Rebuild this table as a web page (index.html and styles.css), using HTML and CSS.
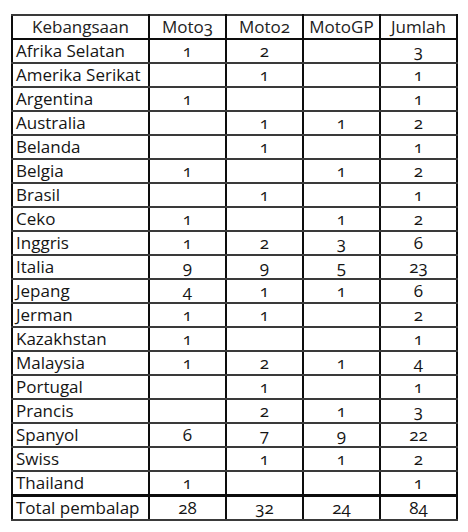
FILE: index.html
```html
<!DOCTYPE html>
<html lang="id">
<head>
<meta charset="utf-8">
<title>Pembalap</title>
<link rel="stylesheet" href="styles.css">
</head>
<body>
<table class="grid">
  <colgroup>
    <col class="c-name"><col class="c-num"><col class="c-num"><col class="c-num"><col class="c-num">
  </colgroup>
  <thead>
    <tr><th>Kebangsaan</th><th>Moto3</th><th>Moto2</th><th>MotoGP</th><th>Jumlah</th></tr>
  </thead>
  <tbody>
    <tr><td>Afrika Selatan</td><td>1</td><td>2</td><td></td><td>3</td></tr>
    <tr><td>Amerika Serikat</td><td></td><td>1</td><td></td><td>1</td></tr>
    <tr><td>Argentina</td><td>1</td><td></td><td></td><td>1</td></tr>
    <tr><td>Australia</td><td></td><td>1</td><td>1</td><td>2</td></tr>
    <tr><td>Belanda</td><td></td><td>1</td><td></td><td>1</td></tr>
    <tr><td>Belgia</td><td>1</td><td></td><td>1</td><td>2</td></tr>
    <tr><td>Brasil</td><td></td><td>1</td><td></td><td>1</td></tr>
    <tr><td>Ceko</td><td>1</td><td></td><td>1</td><td>2</td></tr>
    <tr><td>Inggris</td><td>1</td><td>2</td><td>3</td><td>6</td></tr>
    <tr><td>Italia</td><td>9</td><td>9</td><td>5</td><td>23</td></tr>
    <tr><td>Jepang</td><td>4</td><td>1</td><td>1</td><td>6</td></tr>
    <tr><td>Jerman</td><td>1</td><td>1</td><td></td><td>2</td></tr>
    <tr><td>Kazakhstan</td><td>1</td><td></td><td></td><td>1</td></tr>
    <tr><td>Malaysia</td><td>1</td><td>2</td><td>1</td><td>4</td></tr>
    <tr><td>Portugal</td><td></td><td>1</td><td></td><td>1</td></tr>
    <tr><td>Prancis</td><td></td><td>2</td><td>1</td><td>3</td></tr>
    <tr><td>Spanyol</td><td>6</td><td>7</td><td>9</td><td>22</td></tr>
    <tr><td>Swiss</td><td></td><td>1</td><td>1</td><td>2</td></tr>
    <tr><td>Thailand</td><td>1</td><td></td><td></td><td>1</td></tr>
  </tbody>
  <tfoot>
    <tr><td>Total pembalap</td><td>28</td><td>32</td><td>24</td><td>84</td></tr>
  </tfoot>
</table>
</body>
</html>
```
FILE: styles.css
```css
html, body {
  margin: 0;
  background: #ffffff;
}
body {
  padding: 14px 0 0 11px;
  font-family: "Open Sans", "Lato", sans-serif;
  font-size: 17px;
  color: #151515;
}
.grid {
  border-collapse: collapse;
  table-layout: fixed;
  width: 446px;
  border: 2px solid #0d0d0d;
  font-variant-numeric: oldstyle-nums;
}
.c-name { width: 137px; }
.c-num { width: 77px; }
.grid th,
.grid td {
  height: 22px;
  padding: 0 3px;
  border-top: 2px solid #3a3a3a;
  border-bottom: 2px solid #3a3a3a;
  border-left: 2px solid #0d0d0d;
  border-right: 2px solid #0d0d0d;
  text-align: center;
  vertical-align: middle;
  line-height: 22px;
  white-space: nowrap;
  overflow: hidden;
}
.grid th {
  font-weight: normal;
  color: #222;
}
.grid td:first-child {
  text-align: left;
  padding-left: 3px;
}
.grid .grid-num {
  font-size: 18px;
}
.grid thead th {
  border-bottom: 2px solid #0d0d0d;
}
.grid tfoot td {
  border-top: 3px solid #0d0d0d;
}
```
